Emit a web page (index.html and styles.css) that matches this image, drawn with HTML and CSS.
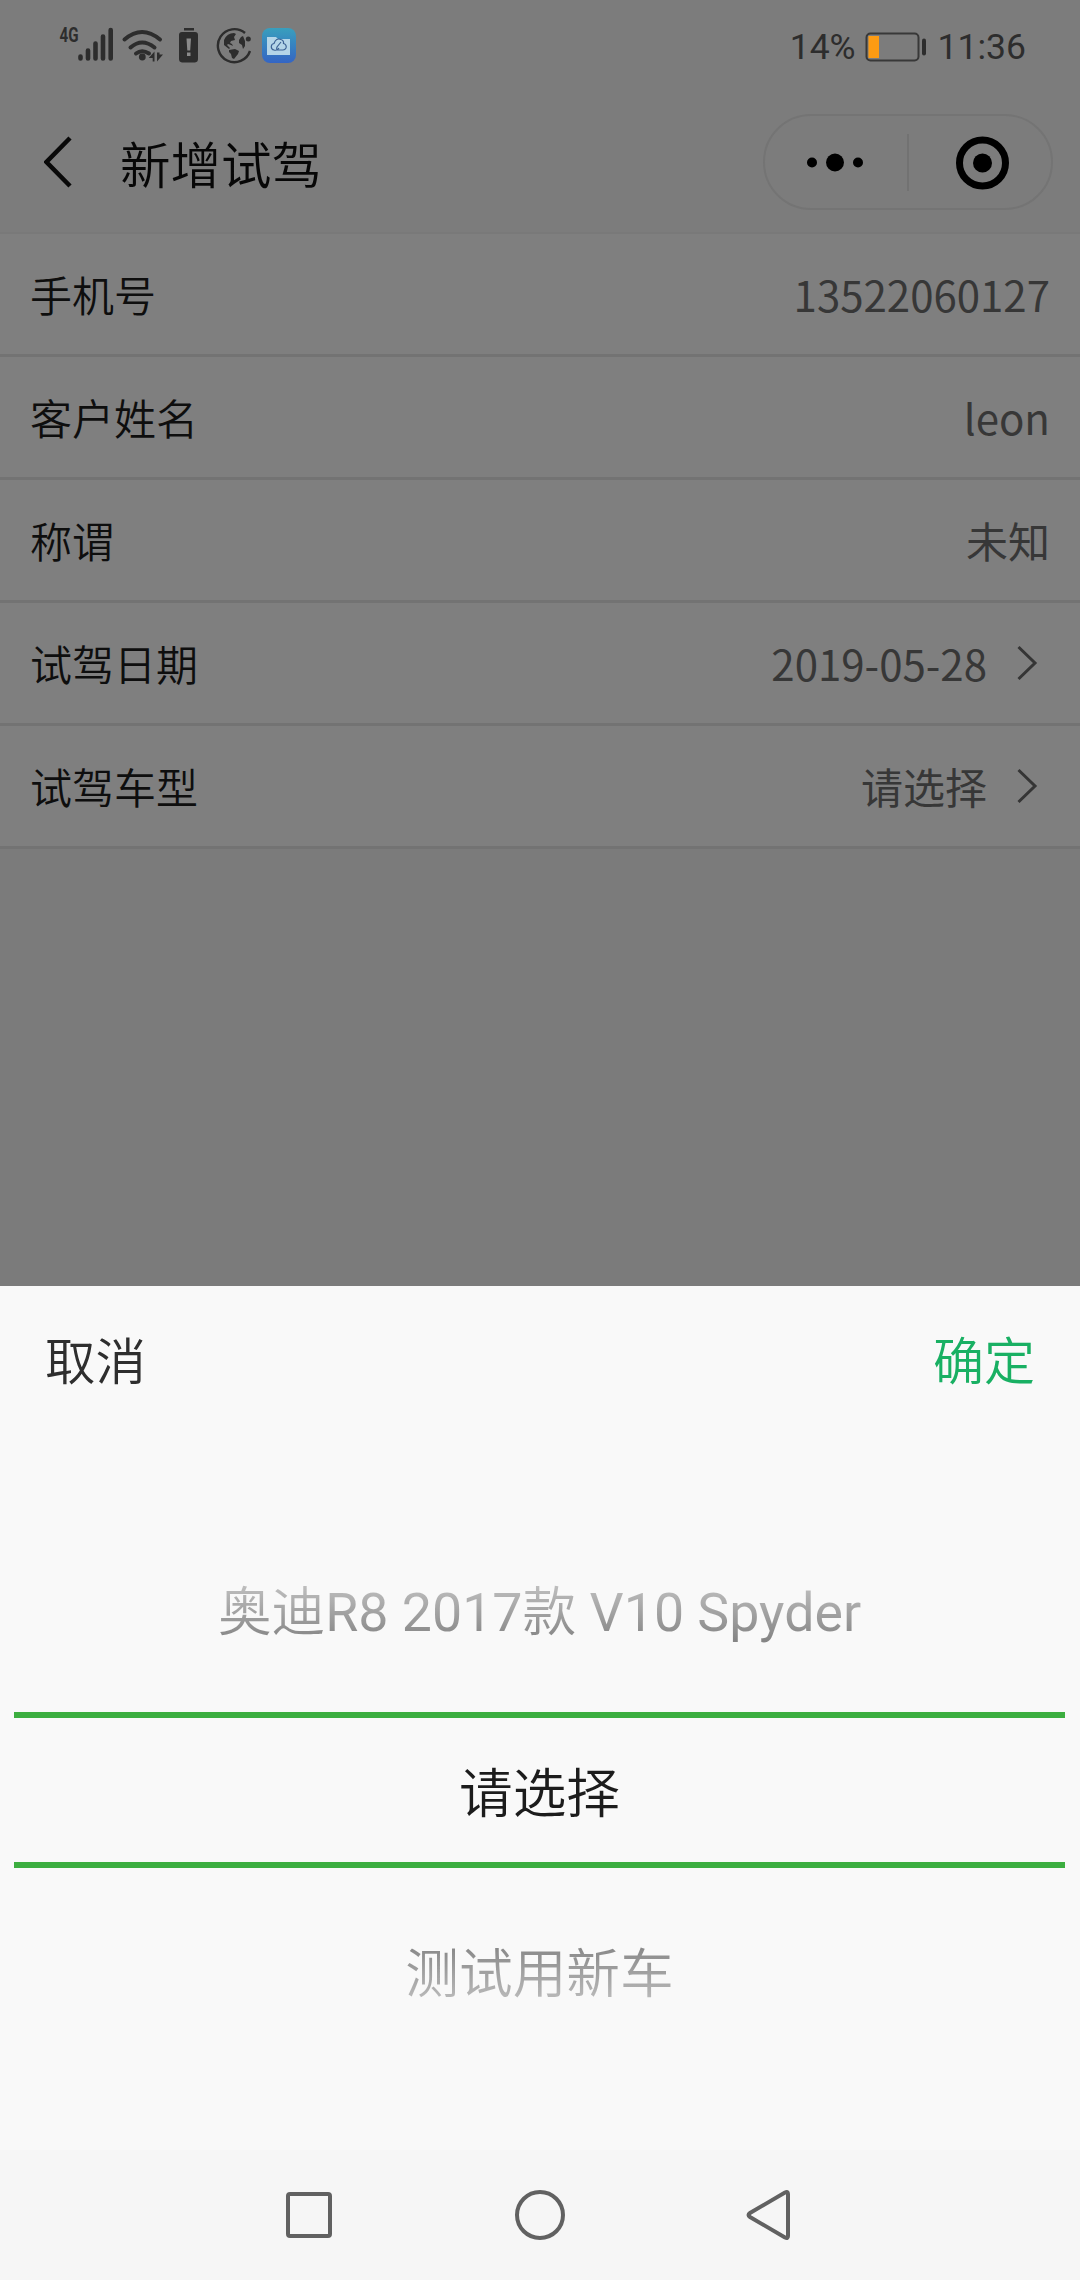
FILE: index.html
```html
<!DOCTYPE html>
<html lang="zh-CN">
<head>
<meta charset="utf-8">
<title>新增试驾</title>
<link rel="stylesheet" href="styles.css">
</head>
<body>
<div class="screen">
  <div class="status-bar">
    <svg class="status-icons" width="260" height="50" viewBox="50 15 260 50">
      <text class="network" x="59.500" y="42" textLength="19" lengthAdjust="spacingAndGlyphs">4G</text>
      <g class="bars">
        <path d="M80.500 56.500v2M88 50.500v8M95.500 43.500v15M103 36.500v22M110.700 30v28.500"/>
      </g>
      <g class="wifi">
        <path d="M124.500 39.500Q142 24.500 160 39.500M130.500 47.500Q142 37.500 154.500 47.500M136 53.500Q142 49 149 53.500"/>
        <circle cx="142.300" cy="57" r="3.400"/>
        <path class="solid" d="M154.500 51.500v10h-1.800v-3.500h-4zM157 52.500v9l6-7h-3.500v-2z"/>
      </g>
      <path class="solid" d="M184 28h10v2.500h-10zM182 32h13a3 3 0 0 1 3 3v24a3.500 3.500 0 0 1-3 3.500h-13a3.500 3.500 0 0 1-3-3.500V35a3 3 0 0 1 3-3z"/>
      <path class="cutout" d="M186.500 38.500h4.500l-.8 12h-2.900zM187 52.500h3.500v3.500H187z"/>
      <g class="globe">
        <path class="orbit" d="M245 33A16.500 16.500 0 1 0 250 51"/>
        <circle cx="248.300" cy="39" r="2.500"/>
        <path d="M224 40q3-7 10-7l2 1-2 3 1 3-4 1-1 2 2 1 1 2-2-1-3-1-1 1 3 3-1 1-5-4zM229 50l6-1 4 2-1 3-4 5-2-1-1-4-2-2zM241 37l2-1 2 5 0 5-2 3-1-4-3-2 0-3z"/>
      </g>
      <defs><linearGradient id="sky" x2="0" y2="1"><stop stop-color="#399fbd"/><stop offset="1" stop-color="#3465c4"/></linearGradient></defs>
      <rect x="262" y="28" width="34" height="35" rx="8" fill="url(#sky)"/>
      <path class="folder" d="M267 37h9l2 2h12v16h-23z"/>
      <path class="cloud" d="M274 50a3.300 3.300 0 0 1 0-6.500q2-6 7-4 3 1 2.500 4 3.500 1 2.500 4.500-1 2-3 2h-5q-2 0-1-3l4-5M279 48q-2 3-5 2"/>
    </svg>
    <div class="status-right">
      <span class="percent">14%</span>
      <svg width="62" height="32" viewBox="0 0 62 32">
        <rect class="cell" x="1.500" y="2.500" width="52" height="27" rx="4"/>
        <rect class="charge" x="3.500" y="5" width="10.500" height="22"/>
        <rect class="tip" x="57" y="7.500" width="4" height="17" rx="2"/>
      </svg>
      <span class="clock">11:36</span>
    </div>
  </div>
  <header class="header">
    <svg class="back" width="30" height="54" viewBox="0 0 30 54"><path d="M26 4L2.500 28 26 52"/></svg>
    <h1 class="title">新增试驾</h1>
    <div class="capsule">
      <svg width="287" height="93" viewBox="1 1 287 93">
        <circle cx="48" cy="47.500" r="5"/><circle cx="71" cy="47.500" r="9"/><circle cx="94" cy="47.500" r="5"/>
        <path class="divider" d="M144 19v57"/>
        <circle class="ring" cx="218.500" cy="48" r="23"/><circle cx="218.500" cy="48" r="9.500"/>
      </svg>
    </div>
  </header>
  <main class="form">
    <div class="row"><span class="label">手机号</span><span class="value">13522060127</span></div>
    <div class="row"><span class="label">客户姓名</span><span class="value">leon</span></div>
    <div class="row"><span class="label">称谓</span><span class="value">未知</span></div>
    <div class="row"><span class="label">试驾日期</span><span class="value">2019-05-28</span><svg class="arrow" width="22" height="38" viewBox="0 0 22 38"><path d="M2.500 3L19 19 2.500 35"/></svg></div>
    <div class="row"><span class="label">试驾车型</span><span class="value">请选择</span><svg class="arrow" width="22" height="38" viewBox="0 0 22 38"><path d="M2.500 3L19 19 2.500 35"/></svg></div>
  </main>
  <section class="sheet">
    <div class="actions"><span class="cancel">取消</span><span class="confirm">确定</span></div>
    <div class="picker">
      <div class="option above">奥迪R8 2017款 V10 Spyder</div>
      <div class="option current">请选择</div>
      <div class="option below">测试用新车</div>
    </div>
  </section>
  <nav class="nav">
    <svg width="1080" height="130" viewBox="0 0 1080 130">
      <rect x="288" y="44" width="42" height="42" rx="2"/>
      <circle cx="540" cy="65" r="23"/>
      <path d="M788 44v42q0 3-3 1.500L750 67q-3-2 0-4l35-20.500q3-1.500 3 1.500z"/>
    </svg>
  </nav>
</div>
</body>
</html>
```
FILE: styles.css
```css
* { box-sizing: border-box; }
body { margin: 0; font-family: "Noto Sans CJK SC", sans-serif; }
.screen { width: 1080px; height: 2280px; display: flex; flex-direction: column; background: #7b7b7b; overflow: hidden; }
svg { display: block; flex: none; }

.status-bar { height: 90px; padding: 15px 54px 0 50px; display: flex; justify-content: space-between; align-items: flex-start; background: #7c7c7c; }
.status-icons { fill: #2d2d2d; }
.network { font: 700 20px Roboto, sans-serif; }
.bars path { fill: none; stroke: #2d2d2d; stroke-width: 4.6; stroke-linecap: round; }
.wifi path { fill: none; stroke: #2d2d2d; stroke-width: 4; stroke-linecap: round; }
.wifi .solid { fill: #2d2d2d; stroke: none; }
.cutout { fill: #8b8b8b; }
.globe .orbit { fill: none; stroke: #2d2d2d; stroke-width: 2.4; }
.folder { fill: #b4d5e8; }
.cloud { fill: none; stroke: #3c6293; stroke-width: 1.2; }
.status-right { display: flex; align-items: center; height: 63px; font: 35.500px/63px Roboto, sans-serif; color: #2d2d2d; }
.status-right span { padding-top: 1px; }
.status-right svg { margin: 0 11px 0 9px; }
.cell { fill: none; stroke: #383838; stroke-width: 2; }
.charge { fill: #fd9b13; }
.tip { fill: #2d2d2d; }

.header { height: 144px; padding: 0 27px 0 44px; display: flex; align-items: center; background: #7c7c7c; border-bottom: 2px solid #797979; }
.back { fill: none; stroke: #090909; stroke-width: 4.5; }
.title { margin: 0 auto 0 46px; padding-top: 1px; font-size: 50.500px; line-height: 76px; font-weight: 350; color: #070707; }
.capsule { width: 290px; height: 96px; margin-top: 1px; border: 2px solid #747474; border-radius: 48px; }
.divider { stroke: #727272; stroke-width: 2; }
.ring { fill: none; stroke: #000; stroke-width: 7; }

.form { background: #7f7f7f; }
.row { height: 123px; padding: 0 30px; display: flex; align-items: center; border-bottom: 3px solid #737373; font-size: 42px; line-height: 62px; }
.label { margin-right: auto; color: #0e0e0e; font-weight: 350; }
.value { color: #373737; font-weight: 400; }
.arrow { margin: 0 12px 0 29px; fill: none; stroke: #353535; stroke-width: 3; }

.sheet { margin-top: auto; height: 864px; background: #f9f9f9; }
.actions { height: 143px; padding: 0 45px; display: flex; justify-content: space-between; align-items: center; font-size: 50.500px; font-weight: 350; }
.cancel { color: #2e2e2e; }
.confirm { color: #19b063; font-size: 51px; }
.picker { padding: 107px 15px 0 14px; text-align: center; font-family: Roboto, "Noto Sans CJK SC", sans-serif; font-size: 53.700px; font-weight: 350; }
.above { height: 176px; line-height: 154px; color: transparent; background: linear-gradient(#bebebe 50px, #858585 104px) text; }
.above { font-weight: 400; font-family: Roboto, "Noto Sans CJK SC DemiLight", "Noto Sans CJK SC", sans-serif; }
.current { height: 156px; padding-top: 5px; line-height: 144px; border: solid #3cae40; border-width: 6px 0; color: #1c1c1c; }
.below { height: 208px; padding-top: 3px; line-height: 208px; color: transparent; background: linear-gradient(#888 78px, #bdbdbd 135px) text; }

.nav { height: 130px; background: #f6f6f6; }
.nav svg { fill: none; stroke: #616161; stroke-width: 4; }
```
